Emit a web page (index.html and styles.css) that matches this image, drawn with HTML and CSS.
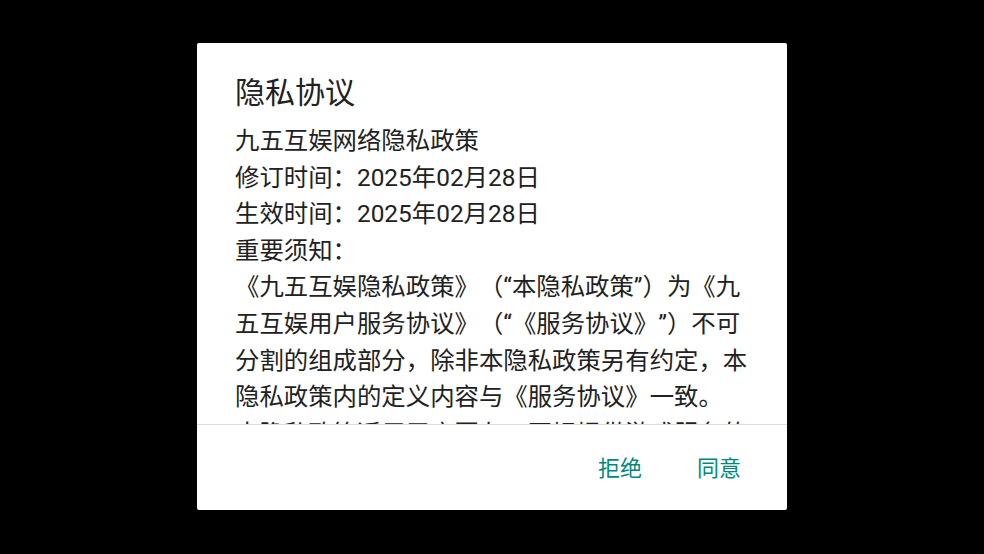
FILE: index.html
```html
<!DOCTYPE html>
<html lang="zh-CN">
<head>
    <meta charset="utf-8">
    <title>隐私协议</title>
    <meta name="viewport" content="width=device-width,initial-scale=1">
    <link rel="stylesheet" href="styles.css">
</head>
<body>
<div class="screen">
    <div class="dialog">
        <!-- 标题 -->
        <div class="title">隐私协议</div>
        <!-- 可滚动的协议内容 -->
        <div class="content">
            <p>九五互娱网络隐私政策</p>
            <p>修订时间：2025年02月28日</p>
            <p>生效时间：2025年02月28日</p>
            <p>重要须知：</p>
            <p>《九五互娱隐私政策》（“本隐私政策”）为《九五互娱用户服务协议》（“《服务协议》”）不可分割的组成部分，除非本隐私政策另有约定，本隐私政策内的定义内容与《服务协议》一致。</p>
            <p>本隐私政策适用于宁夏九五互娱提供游戏服务的</p>
        </div>
        <!-- 底部按钮 -->
        <div class="actions">
            <button class="btn">拒绝</button>
            <button class="btn">同意</button>
        </div>
    </div>
</div>
</body>
</html>
```

FILE: styles.css
```css
html,
body {
    margin: 0;
    height: 100%;
    background: #000;
}

.screen {
    height: 100%;
    display: flex;
    justify-content: center;
    padding-top: 43px;
    box-sizing: border-box;
    font-family: Roboto, "Noto Sans CJK SC", sans-serif;
}

.dialog {
    width: 590px;
    height: 467px;
    background: #fff;
    border-radius: 2px;
    display: flex;
    flex-direction: column;
}

.title {
    padding: 32px 38px 0 38px;
    font-size: 30px;
    line-height: 36px;
    color: #212121;
}

.content {
    /* 内容区域超出部分被裁掉 */
    flex: 1;
    overflow: hidden;
    margin-top: 12px;
    padding: 0 38px;
    font-size: 24.4px;
    line-height: 36.6px;
    color: #212121;
    text-spacing-trim: space-all;
    border-bottom: 1px solid #dcdcdc;
}

.content p {
    margin: 0;
}

.actions {
    height: 85px;
    display: flex;
    justify-content: flex-end;
    align-items: center;
    gap: 23px;
    padding: 2px 30px 0 0;
    box-sizing: border-box;
}

.btn {
    border: 0;
    background: none;
    padding: 0 16px;
    font-family: inherit;
    font-size: 22px;
    line-height: 40px;
    color: #00897b;
}
```
